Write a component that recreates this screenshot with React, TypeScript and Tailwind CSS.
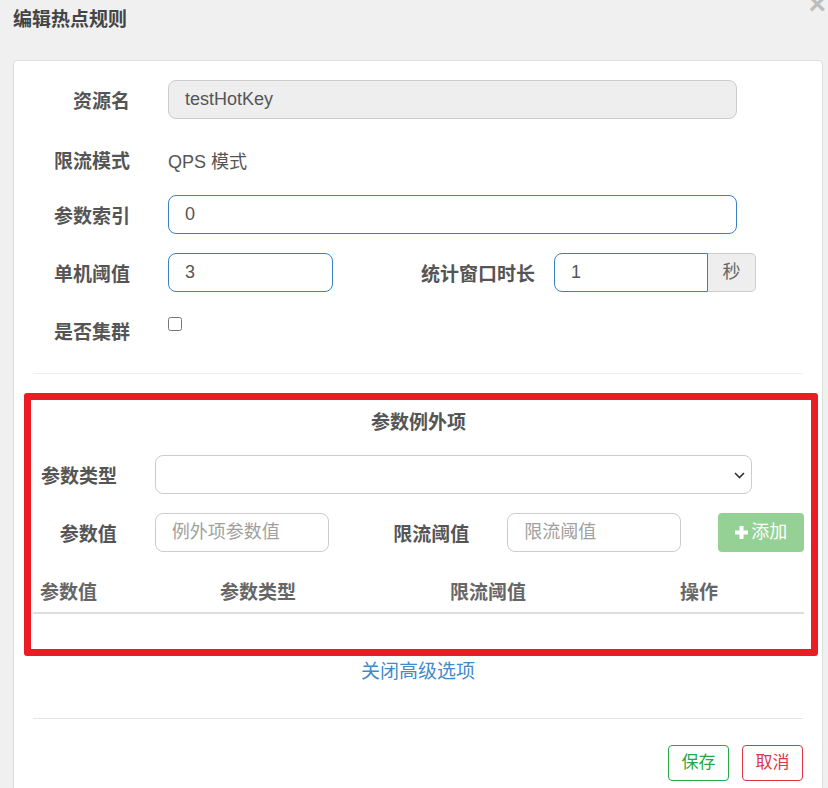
import React from 'react';

const font = { fontFamily: '"Liberation Sans", "Noto Sans CJK SC", sans-serif' };

function PlusIcon() {
  return (
    <svg width="13" height="13" viewBox="0 0 13 13" className="shrink-0">
      <rect x="4.5" y="0" width="4" height="13" fill="white" />
      <rect x="0" y="4.5" width="13" height="4" fill="white" />
    </svg>
  );
}

export default function App() {
  return (
    <div className="relative h-screen overflow-hidden bg-[#f0f0f0] text-[#555]" style={font}>
      {/* close */}
      <span className="absolute right-[2px] top-[-11px] text-[30px] font-bold leading-none text-[#bdbdbd]">×</span>

      <div className="px-[13px] pt-[6px]">
        <h3 className="text-[19px] font-bold leading-[27px] text-[#444]">编辑热点规则</h3>

        <div className="mt-[27px] w-[810px] rounded-[4px] border border-[#dddddd] bg-white pt-[19px] pb-10">
          {/* 资源名 */}
          <div className="flex h-[39px] items-center">
            <label className="w-[116px] pt-[5px] text-right text-[19px] font-bold">资源名</label>
            <div className="ml-[38px] flex h-[39px] w-[569px] items-center rounded-[8px] border border-[#cccccc] bg-[#eeeeee] px-4 text-[18px] text-[#555]">
              testHotKey
            </div>
          </div>

          {/* 限流模式 */}
          <div className="mt-[19px] flex h-[44px] items-center">
            <label className="w-[116px] pt-[5px] text-right text-[19px] font-bold">限流模式</label>
            <span className="ml-[38px] pt-[4px] text-[18px]">QPS 模式</span>
          </div>

          {/* 参数索引 */}
          <div className="mt-[13px] flex h-[39px] items-center">
            <label className="w-[116px] pt-[5px] text-right text-[19px] font-bold">参数索引</label>
            <input
              readOnly
              value="0"
              className="ml-[38px] h-[39px] w-[569px] rounded-[8px] border border-[#3b7fc4] px-4 text-[18px] text-[#555] outline-none"
            />
          </div>

          {/* 单机阈值 / 统计窗口时长 */}
          <div className="mt-[19px] flex h-[39px] items-center">
            <label className="w-[116px] pt-[5px] text-right text-[19px] font-bold">单机阈值</label>
            <input
              readOnly
              value="3"
              className="ml-[38px] h-[39px] w-[165px] rounded-[8px] border border-[#3b7fc4] px-4 text-[18px] text-[#555] outline-none"
            />
            <label className="w-[202px] pt-[5px] text-right text-[19px] font-bold">统计窗口时长</label>
            <div className="ml-[19px] flex h-[39px]">
              <input
                readOnly
                value="1"
                className="h-[39px] w-[154px] rounded-l-[8px] border border-[#3b7fc4] px-4 text-[18px] text-[#555] outline-none"
              />
              <span className="flex w-[48px] items-center justify-center rounded-r-[5px] border border-l-0 border-[#cccccc] bg-[#eeeeee] text-[18px] text-[#666]">
                秒
              </span>
            </div>
          </div>

          {/* 是否集群 */}
          <div className="mt-[19px] flex items-start">
            <label className="w-[116px] pt-[8px] text-right text-[19px] font-bold leading-[27px]">是否集群</label>
            <input type="checkbox" className="ml-[38px] mt-[6px] h-[14px] w-[14px]" />
          </div>

          <div className="mx-[19px] mt-[27px] h-px bg-[#eeeeee]" />

          {/* 参数例外项 */}
          <div className="ml-[10px] mr-[4px] mt-[19px] rounded-[3px] border-[7px] border-[#ed1c24] pl-[2px] pr-[7px]">
            <div className="pt-[9px] text-center text-[19px] font-bold leading-[27px]">参数例外项</div>

            <div className="mt-[19px] flex h-[39px] items-center">
              <label className="w-[84px] pt-[5px] text-right text-[19px] font-bold">参数类型</label>
              <div className="relative ml-[38px] h-[39px] w-[597px]">
                <select className="h-full w-full appearance-none rounded-[8px] border border-[#cccccc] bg-white px-3 text-[18px] outline-none">
                  <option value=""></option>
                </select>
                <svg
                  width="11"
                  height="7"
                  viewBox="0 0 11 7"
                  className="pointer-events-none absolute right-[7px] top-[17px]"
                >
                  <path d="M1 1l4.5 4.5L10 1" fill="none" stroke="#333" strokeWidth="1.6" />
                </svg>
              </div>
            </div>

            <div className="mt-[19px] flex h-[39px] items-center">
              <label className="w-[84px] pt-[5px] text-right text-[19px] font-bold">参数值</label>
              <input
                placeholder="例外项参数值"
                className="ml-[38px] h-[39px] w-[174px] rounded-[8px] border border-[#cccccc] px-4 text-[18px] outline-none placeholder:text-[#a0a0a0]"
              />
              <label className="w-[141px] pt-[5px] text-right text-[19px] font-bold">限流阈值</label>
              <input
                placeholder="限流阈值"
                className="ml-[38px] h-[39px] w-[174px] rounded-[8px] border border-[#cccccc] px-4 text-[18px] outline-none placeholder:text-[#a0a0a0]"
              />
              <button className="ml-[37px] flex h-[39px] w-[86px] items-center justify-center gap-[3px] rounded-[4px] bg-[#95d095] text-[18px] text-white">
                <PlusIcon />
                添加
              </button>
            </div>

            <div className="mt-[21px] flex h-[41px] items-center border-b-2 border-[#dddddd] pt-[2px] text-[19px] font-bold text-[#666]">
              <div className="w-[180px] pl-[7px]">参数值</div>
              <div className="w-[230px] pl-[7px]">参数类型</div>
              <div className="w-[230px] pl-[7px]">限流阈值</div>
              <div className="flex-1 pl-[7px]">操作</div>
            </div>
            <div className="h-[35px]" />
          </div>

          <div className="mt-[2px] text-center text-[19px] leading-[27px] text-[#428bca]">关闭高级选项</div>

          <div className="mx-[19px] mt-[33px] h-px bg-[#e5e5e5]" />

          <div className="mr-[19px] mt-[26px] flex justify-end gap-[13px]">
            <button className="h-[36px] w-[61px] rounded-[4px] border border-[#28a745] text-[17px] text-[#28a745]">
              保存
            </button>
            <button className="h-[36px] w-[61px] rounded-[4px] border border-[#dc3545] text-[17px] text-[#dc3545]">
              取消
            </button>
          </div>
        </div>
      </div>
    </div>
  );
}
